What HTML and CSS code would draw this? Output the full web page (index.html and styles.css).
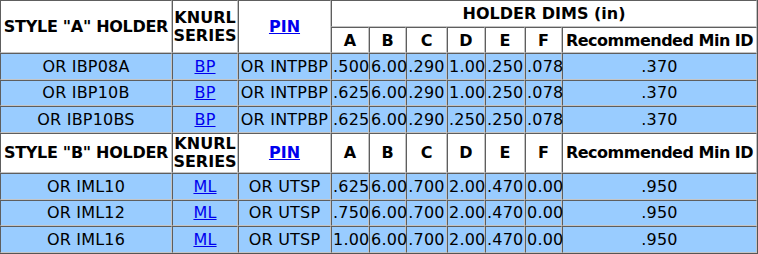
FILE: index.html
```html
<!DOCTYPE html>
<html>
<head>
<meta charset="utf-8">
<link rel="stylesheet" href="styles.css">
</head>
<body>
<table class="dims">
<colgroup>
<col class="c-holder"><col class="c-knurl"><col class="c-pin"><col class="c-a"><col class="c-b"><col class="c-c"><col class="c-d"><col class="c-e"><col class="c-f"><col class="c-min">
</colgroup>
<tbody>
<tr class="head-top"><th rowspan="2" class="tight">STYLE "A" HOLDER</th><th rowspan="2" class="knurl">KNURL<br>SERIES</th><th rowspan="2"><a href="#">PIN</a></th><th colspan="7">HOLDER DIMS (in)</th></tr>
<tr class="head-sub"><th>A</th><th>B</th><th>C</th><th>D</th><th>E</th><th>F</th><th class="tighter">Recommended Min ID</th></tr>
<tr class="data"><td>OR IBP08A</td><td><a href="#">BP</a></td><td>OR INTPBP</td><td>.500</td><td>6.00</td><td>.290</td><td>1.00</td><td>.250</td><td>.078</td><td>.370</td></tr>
<tr class="data"><td>OR IBP10B</td><td><a href="#">BP</a></td><td>OR INTPBP</td><td>.625</td><td>6.00</td><td>.290</td><td>1.00</td><td>.250</td><td>.078</td><td>.370</td></tr>
<tr class="data"><td>OR IBP10BS</td><td><a href="#">BP</a></td><td>OR INTPBP</td><td>.625</td><td>6.00</td><td>.290</td><td>.250</td><td>.250</td><td>.078</td><td>.370</td></tr>
<tr class="head-b"><th class="tight">STYLE "B" HOLDER</th><th class="knurl">KNURL<br>SERIES</th><th><a href="#">PIN</a></th><th>A</th><th>B</th><th>C</th><th>D</th><th>E</th><th>F</th><th class="tighter">Recommended Min ID</th></tr>
<tr class="data"><td>OR IML10</td><td><a href="#">ML</a></td><td>OR UTSP</td><td>.625</td><td>6.00</td><td>.700</td><td>2.00</td><td>.470</td><td>0.00</td><td>.950</td></tr>
<tr class="data"><td>OR IML12</td><td><a href="#">ML</a></td><td>OR UTSP</td><td>.750</td><td>6.00</td><td>.700</td><td>2.00</td><td>.470</td><td>0.00</td><td>.950</td></tr>
<tr class="data"><td>OR IML16</td><td><a href="#">ML</a></td><td>OR UTSP</td><td>1.00</td><td>6.00</td><td>.700</td><td>2.00</td><td>.470</td><td>0.00</td><td>.950</td></tr>
</tbody>
</table>
</body>
</html>
```

FILE: styles.css
```css
html, body {
  margin: 0;
  padding: 0;
  background: #ffffff;
}

.dims {
  table-layout: fixed;
  width: 758px;
  border-collapse: separate;
  border-spacing: 0;
  border-right: 1px solid #555555;
  border-bottom: 1px solid #555555;
  font-family: "DejaVu Sans", Verdana, sans-serif;
  font-size: 16px;
  line-height: 17px;
  color: #000000;
}

.c-holder { width: 172px; }
.c-knurl { width: 66px; }
.c-pin { width: 93px; }
.c-a { width: 38px; }
.c-b { width: 37px; }
.c-c { width: 41px; }
.c-d { width: 38px; }
.c-e { width: 40px; }
.c-f { width: 37px; }
.c-min { width: 195px; }

.dims th,
.dims td {
  box-sizing: border-box;
  padding: 0 1px;
  text-align: center;
  vertical-align: middle;
  white-space: nowrap;
  overflow: visible;
  border-style: solid;
  border-width: 1px;
  border-color: #5e5e5e #c4c4c4 #c4c4c4 #5e5e5e;
}

.dims th {
  font-weight: bold;
  background: #ffffff;
}

.dims td {
  letter-spacing: 0.2px;
}

.dims th.tight {
  letter-spacing: -0.3px;
  padding: 0;
}

.dims th.tighter {
  letter-spacing: -0.5px;
  padding: 0;
}

.dims th.knurl {
  line-height: 18px;
  padding: 0;
}

.dims a {
  color: #0000ee;
  text-decoration: underline;
}

.head-top { height: 27px; }
.head-sub { height: 26px; }
.head-b { height: 40px; }

.data { height: 26.67px; }
.data td { background: #99ccff; }
```
